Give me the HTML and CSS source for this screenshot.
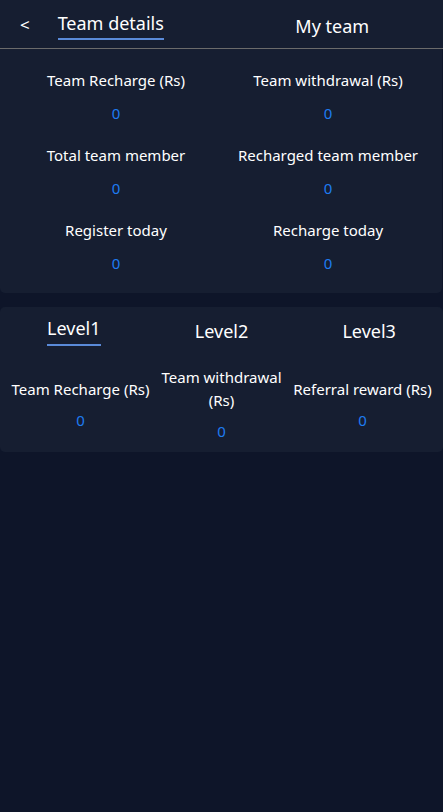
FILE: index.html
```html
<!DOCTYPE html>
<html lang="en">
<head>
  <meta charset="UTF-8">
  <meta name="viewport" content="width=device-width, initial-scale=1.0">
  <title>Team</title>
  <link rel="stylesheet" href="styles.css">
</head>
<body>
  <div class="header">
    <span class="back">&lt;</span>
    <div class="head-tab active"><span>Team details</span></div>
    <div class="head-tab"><span>My team</span></div>
  </div>

  <div class="summary">
    <div class="cell">
      <div class="label">Team Recharge (Rs)</div>
      <div class="value">0</div>
    </div>
    <div class="cell">
      <div class="label">Team withdrawal (Rs)</div>
      <div class="value">0</div>
    </div>
    <div class="cell">
      <div class="label">Total team member</div>
      <div class="value">0</div>
    </div>
    <div class="cell">
      <div class="label">Recharged team member</div>
      <div class="value">0</div>
    </div>
    <div class="cell">
      <div class="label">Register today</div>
      <div class="value">0</div>
    </div>
    <div class="cell">
      <div class="label">Recharge today</div>
      <div class="value">0</div>
    </div>
  </div>

  <div class="levels">
    <div class="level-tabs">
      <div class="level-tab active"><span>Level1</span></div>
      <div class="level-tab"><span>Level2</span></div>
      <div class="level-tab"><span>Level3</span></div>
    </div>
    <div class="level-stats">
      <div class="stat">
        <div class="label">Team Recharge (Rs)</div>
        <div class="value">0</div>
      </div>
      <div class="stat">
        <div class="label">Team withdrawal (Rs)</div>
        <div class="value">0</div>
      </div>
      <div class="stat">
        <div class="label">Referral reward (Rs)</div>
        <div class="value">0</div>
      </div>
    </div>
  </div>
</body>
</html>
```

FILE: styles.css
```css
body {
  margin: 0;
  background-color: #0e1529;
  font-family: 'Noto Sans', 'Open Sans', sans-serif;
  color: #fff;
}

/* top bar */
.header {
  position: relative;
  display: flex;
  height: 48px;
  background-color: #161e31;
  border-bottom: 1px solid #6b6b6b;
}

.back {
  position: absolute;
  left: 20px;
  top: 14px;
  font-size: 17px;
  line-height: 22px;
}

.head-tab {
  flex: 1;
  display: flex;
  justify-content: center;
  align-items: flex-start;
  padding-top: 11px;
  font-size: 18px;
}

.head-tab span {
  line-height: 24px;
  padding-top: 3px;
}

.head-tab.active span {
  padding-top: 0;
  padding-bottom: 3px;
  border-bottom: 2px solid #5a8ad8;
}

/* summary card */
.summary {
  display: grid;
  grid-template-columns: 1fr 1fr;
  row-gap: 18px;
  width: 442px;
  box-sizing: border-box;
  padding: 19px 8px 18px 10px;
  background-color: #161e31;
  border-radius: 0 0 5px 5px;
}

.cell,
.stat {
  text-align: center;
}

.label {
  font-size: 15px;
  line-height: 24px;
}

.value {
  margin-top: 9px;
  font-size: 15px;
  line-height: 24px;
  color: #1e7cf2;
}

/* level card */
.levels {
  margin-top: 14px;
  background-color: #161e31;
  border-radius: 5px;
}

.level-tabs {
  display: flex;
  height: 50px;
}

.level-tab {
  flex: 1;
  display: flex;
  justify-content: center;
  padding-top: 9px;
  font-size: 18px;
}

.level-tab span {
  line-height: 24px;
  height: 24px;
  padding-top: 3px;
}

.level-tab.active span {
  padding-top: 0;
  padding-bottom: 4px;
  border-bottom: 2px solid #5a8ad8;
}

.level-stats {
  display: flex;
  align-items: center;
  height: 95px;
  padding: 0 10px;
}

.stat {
  flex: 1;
}

.stat .label {
  line-height: 23px;
}

.stat .value {
  margin-top: 7px;
  line-height: 24px;
}
```
